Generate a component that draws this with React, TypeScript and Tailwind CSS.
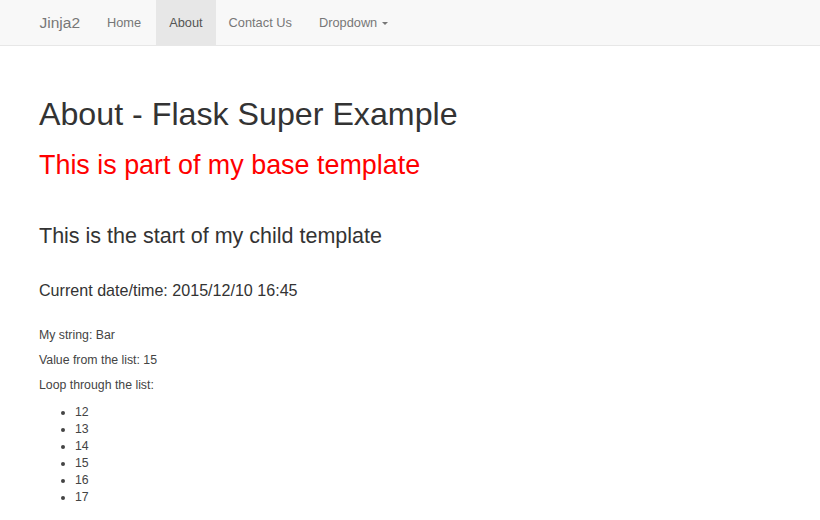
import React from "react";

export default function App() {
  const font = { fontFamily: '"Liberation Sans", Arial, sans-serif' };
  return (
    <div className="w-[820px] h-[520px] bg-white text-[#333]" style={font}>
      <nav className="h-[46px] bg-[#f8f8f8] border-b border-[#e7e7e7] flex items-stretch pl-[26px]">
        <a className="flex items-center pl-[13.5px] pr-[13.5px] text-[15.5px] text-[#777]">Jinja2</a>
        <a className="flex items-center pl-[13.5px] pr-[14.5px] text-[12.8px] text-[#777]">Home</a>
        <a className="flex items-center px-[13.5px] text-[12.8px] text-[#555] bg-[#e7e7e7]">About</a>
        <a className="flex items-center pl-[12.5px] pr-[13.5px] text-[12.8px] text-[#777]">Contact Us</a>
        <a className="flex items-center px-[13.5px] text-[12.8px] text-[#777]">
          Dropdown
          <span className="ml-[5px] mt-[1px] inline-block w-0 h-0 border-l-[3.5px] border-r-[3.5px] border-t-[3.5px] border-l-transparent border-r-transparent border-t-[#777]" />
        </a>
      </nav>
      <main className="pl-[39px] flex flex-col items-start">
        <h1 className="mt-[51px] text-[32.2px] leading-[35px] text-[#333]">About - Flask Super Example</h1>
        <h2 className="mt-[18px] text-[26.9px] leading-[30px] text-[#ff0000]">This is part of my base template</h2>
        <h3 className="mt-[44px] text-[21.5px] leading-[24px] text-[#333]">This is the start of my child template</h3>
        <h4 className="mt-[33px] text-[16.1px] leading-[18px] text-[#333]">Current date/time: 2015/12/10 16:45</h4>
        <p className="mt-[28px] text-[12.3px] leading-[17px] text-[#444]">My string: Bar</p>
        <p className="mt-[8px] text-[12.3px] leading-[17px] text-[#444]">Value from the list: 15</p>
        <p className="mt-[8px] text-[12.3px] leading-[17px] text-[#444]">Loop through the list:</p>
        <ul className="mt-[10px] text-[12.3px] leading-[17px] list-disc pl-[36px] text-[#444]">
          {[12, 13, 14, 15, 16, 17].map((n) => (
            <li key={n}>{n}</li>
          ))}
        </ul>
      </main>
    </div>
  );
}
